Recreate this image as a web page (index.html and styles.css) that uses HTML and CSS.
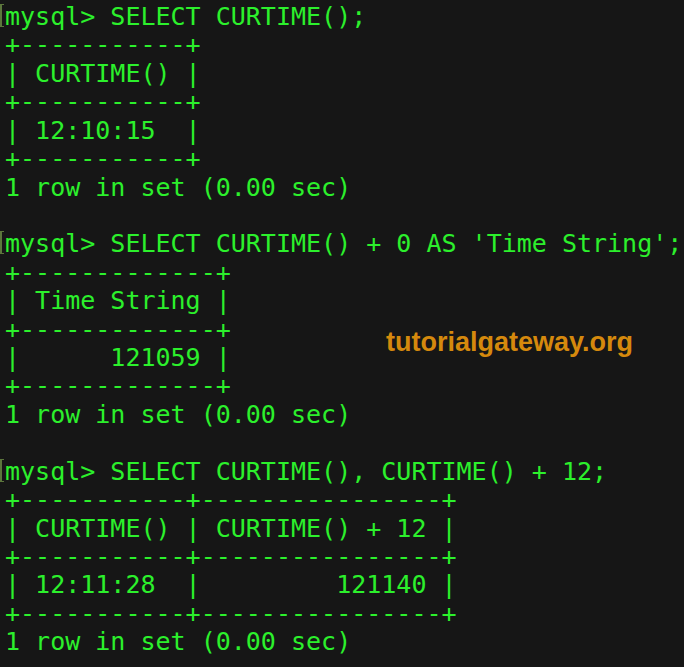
FILE: index.html
```html
<!DOCTYPE html>
<html lang="en">
<head>
<meta charset="utf-8">
<title>MySQL CURTIME</title>
<link rel="stylesheet" href="styles.css">
</head>
<body>
<main class="term">
<pre class="out"><span class="prompt">mysql&gt; SELECT CURTIME();</span>
+-----------+
| CURTIME() |
+-----------+
| 12:10:15  |
+-----------+
1 row in set (0.00 sec)

<span class="prompt">mysql&gt; SELECT CURTIME() + 0 AS 'Time String';</span>
+-------------+
| Time String |
+-------------+
|      121059 |
+-------------+
1 row in set (0.00 sec)

<span class="prompt">mysql&gt; SELECT CURTIME(), CURTIME() + 12;</span>
+-----------+----------------+
| CURTIME() | CURTIME() + 12 |
+-----------+----------------+
| 12:11:28  |         121140 |
+-----------+----------------+
1 row in set (0.00 sec)</pre>
<div class="mark">tutorialgateway.org</div>
</main>
</body>
</html>
```

FILE: styles.css
```css
html, body {
  margin: 0;
  padding: 0;
  background: #161616;
  width: 684px;
  height: 667px;
  overflow: hidden;
}

.term {
  position: relative;
  width: 684px;
  height: 667px;
  background: #161616;
}

.out {
  margin: 0;
  padding: 3px 0 0 5px;
  font-family: "DejaVu Sans Mono", monospace;
  font-size: 25px;
  line-height: 28.42px;
  color: #2cf02c;
  white-space: pre;
}

.prompt {
  position: relative;
}

.prompt::before {
  content: "";
  position: absolute;
  left: -5px;
  top: 2px;
  width: 2px;
  height: 21px;
  border: 2px solid #5c763c;
  border-right: none;
  border-top-width: 1px;
  border-bottom-width: 1px;
}

.mark {
  position: absolute;
  left: 386px;
  top: 329px;
  font-family: "Liberation Sans", Arial, sans-serif;
  font-weight: bold;
  font-size: 27px;
  line-height: 1;
  color: #d5890d;
}
```
